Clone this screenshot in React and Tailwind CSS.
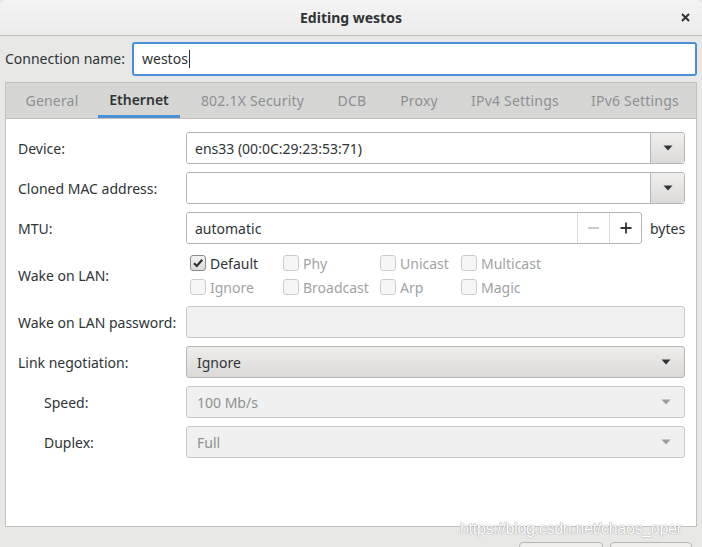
import React from "react";

const font = { fontFamily: '"Noto Sans", "Open Sans", sans-serif' };

function Arrow({ color = "#2e3436" }) {
  return (
    <svg width="10" height="6" viewBox="0 0 10 6">
      <path d="M0.5 0.5 L9.5 0.5 L5 5.5 Z" fill={color} />
    </svg>
  );
}

function Check({ checked, label, disabled }) {
  return (
    <div className="flex items-center gap-[4px] h-[24px]">
      <div
        className={
          checked
            ? "w-[16px] h-[16px] rounded-[3px] border border-[#8c8a86] bg-gradient-to-b from-[#f4f4f3] to-[#dcdad8] flex items-center justify-center"
            : "w-[16px] h-[16px] rounded-[3px] border border-[#d0cdc9] bg-[#f6f6f6]"
        }
      >
        {checked && (
          <svg width="12" height="12" viewBox="0 0 12 12">
            <path d="M2 6.2 L4.8 9 L10.2 2.8" stroke="#2e3436" strokeWidth="2.2" fill="none" />
          </svg>
        )}
      </div>
      <span className={disabled ? "text-[#a0a3a4]" : "text-[#2e3436]"}>{label}</span>
    </div>
  );
}

function Label({ children, indent }) {
  return (
    <div className={"flex items-center text-[#2e3436] " + (indent ? "pl-[26px]" : "")}>{children}</div>
  );
}

const tabs = [
  ["General", "w-[76px]"],
  ["Ethernet", "w-[82px]"],
  ["802.1X Security", "w-[129px]"],
  ["DCB", "w-[54px]"],
  ["Proxy", "w-[64px]"],
  ["IPv4 Settings", "w-[112px]"],
  ["IPv6 Settings", "w-[112px]"],
];

export default function App() {
  return (
    <div className="w-[702px] h-[547px] overflow-hidden bg-[#e8e8e7] relative text-[14px]" style={font}>
      {/* title bar */}
      <div className="h-[36px] bg-gradient-to-b from-[#f4f4f4] to-[#ececec] border-b border-[#c4c0bb] rounded-t-[6px] flex items-center justify-center relative">
        <span className="font-bold text-[#2e3436] text-[14px] -mt-[1px]">Editing westos</span>
        <svg className="absolute right-[12px] top-[13px]" width="9" height="9" viewBox="0 0 9 9">
          <path d="M1 1 L8 8 M8 1 L1 8" stroke="#2e3436" strokeWidth="2" />
        </svg>
      </div>

      {/* connection name */}
      <div className="flex items-center h-[46px] pl-[5px] pr-[5px] pb-[1px]">
        <span className="text-[#2e3436] w-[127px]">Connection name:</span>
        <div className="flex-1 h-[34px] border-2 border-[#4a90d9] rounded-[3px] bg-white flex items-center pl-[8px] text-[#2e3436]">
          westos<span className="w-[1px] h-[18px] bg-[#2e3436] ml-[1px]" />
        </div>
      </div>

      {/* notebook */}
      <div className="mx-[5px] border border-[#c4c0bb] bg-white h-[445px] flex flex-col">
        <div className="h-[36px] bg-[#d6d6d5] border-b border-[#c4c0bb] flex items-stretch pl-[8px] gap-[8px] shrink-0">
          {tabs.map(([t, w]) => (
            <div
              key={t}
              className={
                t === "Ethernet"
                  ? w + " flex items-center justify-center text-[#2e3436] font-semibold border-b-[3px] border-[#4a90d9] pt-[1px]"
                  : w + " flex items-center justify-center text-[#8d9091] -mt-[1px] tracking-[0.2px]"
              }
            >
              {t}
            </div>
          ))}
        </div>

        <div className="grid grid-cols-[168px_1fr] gap-y-[8px] pt-[13px] pl-[12px] pr-[11px]">
          <Label>Device:</Label>
          <div className="h-[32px] border border-[#b6b6b3] rounded-[3px] bg-white flex">
            <div className="flex-1 flex items-center pl-[8px] text-[#2e3436]">ens33 (00:0C:29:23:53:71)</div>
            <div className="w-[34px] border-l border-[#b6b6b3] bg-gradient-to-b from-[#f0efee] to-[#dcdad8] flex items-center justify-center rounded-r-[3px]">
              <Arrow />
            </div>
          </div>

          <Label>Cloned MAC address:</Label>
          <div className="h-[32px] border border-[#b6b6b3] rounded-[3px] bg-white flex">
            <div className="flex-1" />
            <div className="w-[34px] border-l border-[#b6b6b3] bg-gradient-to-b from-[#f0efee] to-[#dcdad8] flex items-center justify-center rounded-r-[3px]">
              <Arrow />
            </div>
          </div>

          <Label>MTU:</Label>
          <div className="flex items-center">
            <div className="w-[456px] h-[32px] border border-[#b6b6b3] rounded-[3px] bg-white flex">
              <div className="flex-1 flex items-center pl-[8px] text-[#2e3436]">automatic</div>
              <div className="w-[32px] border-l border-[#dcdad8] flex items-center justify-center">
                <span className="w-[11px] h-[1.5px] bg-[#c9c9c9]" />
              </div>
              <div className="w-[32px] border-l border-[#dcdad8] flex items-center justify-center">
                <svg width="12" height="12" viewBox="0 0 12 12">
                  <path d="M6 0.5 V11.5 M0.5 6 H11.5" stroke="#2e3436" strokeWidth="1.8" />
                </svg>
              </div>
            </div>
            <span className="ml-[8px] text-[#2e3436]">bytes</span>
          </div>

          <Label>Wake on LAN:</Label>
          <div className="grid grid-cols-[93px_97px_81px_100px] pl-[4px] -my-[1px]">
            <Check checked label="Default" />
            <Check label="Phy" disabled />
            <Check label="Unicast" disabled />
            <Check label="Multicast" disabled />
            <Check label="Ignore" disabled />
            <Check label="Broadcast" disabled />
            <Check label="Arp" disabled />
            <Check label="Magic" disabled />
          </div>

          <Label>Wake on LAN password:</Label>
          <div className="h-[32px] border border-[#cdc9c5] rounded-[3px] bg-[#f1f1f1]" />

          <Label>Link negotiation:</Label>
          <div className="h-[32px] border border-[#b6b6b3] rounded-[3px] bg-gradient-to-b from-[#eeedec] to-[#dcdad8] flex items-center justify-between pl-[10px] pr-[13px] text-[#2e3436]">
            <span>Ignore</span>
            <Arrow />
          </div>

          <Label indent>Speed:</Label>
          <div className="h-[32px] border border-[#cdc9c5] rounded-[3px] bg-[#f0f0f0] flex items-center justify-between pl-[10px] pr-[13px] text-[#8d9091]">
            <span>100 Mb/s</span>
            <Arrow color="#9a9c9d" />
          </div>

          <Label indent>Duplex:</Label>
          <div className="h-[32px] border border-[#cdc9c5] rounded-[3px] bg-[#f0f0f0] flex items-center justify-between pl-[10px] pr-[13px] text-[#8d9091]">
            <span>Full</span>
            <Arrow color="#9a9c9d" />
          </div>
        </div>
      </div>

      {/* bottom buttons peeking */}
      <div className="flex justify-end gap-[7px] pr-[10px] pt-[15px]">
        <div className="w-[84px] h-[20px] border border-[#b6b6b3] rounded-t-[4px] bg-[#f0efee]" />
        <div className="w-[82px] h-[20px] border border-[#b6b6b3] rounded-t-[4px] bg-[#f0efee]" />
      </div>

      {/* watermark */}
      <div
        className="absolute left-[460px] top-[517px] text-[16px] text-white tracking-[-0.3px]"
        style={{ fontFamily: '"Liberation Sans", Arial, sans-serif', textShadow: "0 0 1px #9a9a9a, 0 0 1px #9a9a9a" }}
      >
        https://blog.csdn.net/chaos_oper
      </div>
    </div>
  );
}
